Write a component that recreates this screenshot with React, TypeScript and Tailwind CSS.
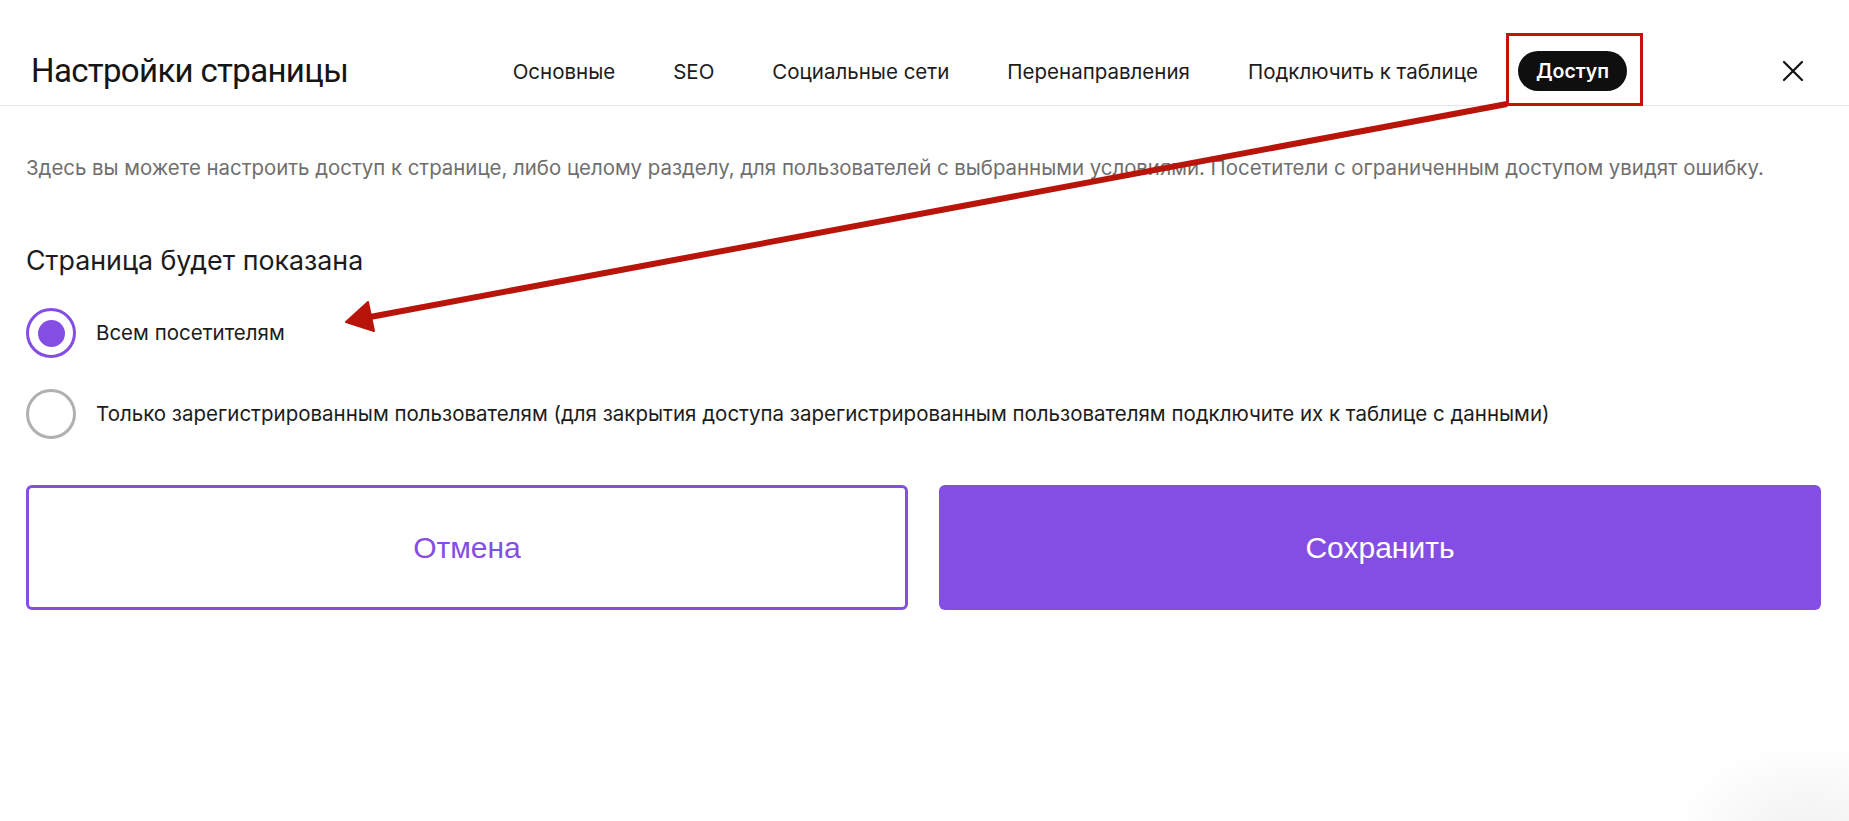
import { useState } from "react";

type Tab = { id: string; label: string };

const tabs: Tab[] = [
  { id: "main", label: "Основные" },
  { id: "seo", label: "SEO" },
  { id: "social", label: "Социальные сети" },
  { id: "redirects", label: "Перенаправления" },
  { id: "table", label: "Подключить к таблице" },
  { id: "access", label: "Доступ" },
];

type Access = "all" | "registered";

function Radio({ checked, onChange, children }: { checked: boolean; onChange: () => void; children: React.ReactNode }) {
  return (
    <label className="flex items-center gap-[20px] cursor-pointer select-none" onClick={onChange}>
      <span
        className={`flex h-[50px] w-[50px] shrink-0 items-center justify-center rounded-full border-[3px] ${
          checked ? "border-[#844ee4]" : "border-[#b0b0b0]"
        }`}
      >
        {checked && <span className="block h-[27px] w-[27px] rounded-full bg-[#844ee4]" />}
      </span>
      <span className="text-[20.5px] leading-[28px] text-[#1c1c1c]">{children}</span>
    </label>
  );
}

// Red pointer from the active tab down to the selected option
function Annotation() {
  return (
    <svg className="pointer-events-none absolute left-0 top-0" width="1849" height="821" viewBox="0 0 1849 821">
      <rect x="1507.5" y="34.5" width="134" height="70" fill="none" stroke="#c0150c" strokeWidth="3" />
      <line x1="1507" y1="104" x2="370" y2="317" stroke="#b8140a" strokeWidth="6" />
      <polygon points="346,322 374,331 368,302" fill="#b8140a" stroke="#b8140a" strokeWidth="2" strokeLinejoin="round" />
    </svg>
  );
}

export default function App() {
  const [active, setActive] = useState("access");
  const [access, setAccess] = useState<Access>("all");

  return (
    <div className="relative min-h-screen w-full overflow-hidden bg-white font-['Inter','Roboto',sans-serif]">
      {/* Header */}
      <div className="mt-[36px] flex h-[70px] items-center border-b border-[#e6e6e6] pl-[31px] pr-[36px]">
        <h1 className="font-['Roboto',sans-serif] text-[33px] font-normal leading-none tracking-[-0.02em] text-[#151515]">
          Настройки страницы
        </h1>
        <nav className="ml-auto flex items-center gap-[22px]">
          {tabs.map((t) => (
            <button
              key={t.id}
              onClick={() => setActive(t.id)}
              className={`h-[40px] rounded-full px-[18px] pt-[3px] ${
                active === t.id
                  ? "bg-[#0f0f0f] text-[19.5px] font-semibold text-white"
                  : "text-[20.5px] text-[#1c1c1c]"
              }`}
            >
              {t.label}
            </button>
          ))}
        </nav>
        <button className="ml-[146px] flex h-[40px] w-[40px] items-center justify-center" aria-label="Закрыть">
          <svg width="22" height="22" viewBox="0 0 22 22" fill="none" stroke="#111" strokeWidth="2.2" strokeLinecap="round">
            <path d="M2 2 L20 20 M20 2 L2 20" />
          </svg>
        </button>
      </div>

      {/* Body */}
      <div className="pl-[26px] pr-[28px]">
        <p className="mt-[48px] text-[20.4px] leading-[28px] text-[#6f6f6f]">
          Здесь вы можете настроить доступ к странице, либо целому разделу, для пользователей с выбранными условиями.
          Посетители с ограниченным доступом увидят ошибку.
        </p>

        <h2 className="mt-[62px] text-[26.8px] font-normal leading-[32px] text-[#1c1c1c]">Страница будет показана</h2>

        <div className="mt-[32px] flex flex-col gap-[31px]">
          <Radio checked={access === "all"} onChange={() => setAccess("all")}>
            Всем посетителям
          </Radio>
          <Radio checked={access === "registered"} onChange={() => setAccess("registered")}>
            Только зарегистрированным пользователям (для закрытия доступа зарегистрированным пользователям подключите их к
            таблице с данными)
          </Radio>
        </div>

        <div className="mt-[46px] grid grid-cols-2 gap-[31px] font-['Liberation_Sans',Arial,sans-serif]">
          <button className="h-[125px] rounded-[6px] border-[3px] border-[#844ee4] bg-white text-[30px] text-[#844ee4]">
            Отмена
          </button>
          <button className="h-[125px] rounded-[6px] bg-[#844ee4] text-[30px] text-white">Сохранить</button>
        </div>
      </div>

      {/* soft shadow of a floating widget in the corner */}
      <div className="pointer-events-none absolute bottom-[-120px] right-[-100px] h-[200px] w-[280px] rounded-full bg-[radial-gradient(closest-side,rgba(0,0,0,0.06),rgba(0,0,0,0))]" />

      <Annotation />
    </div>
  );
}
